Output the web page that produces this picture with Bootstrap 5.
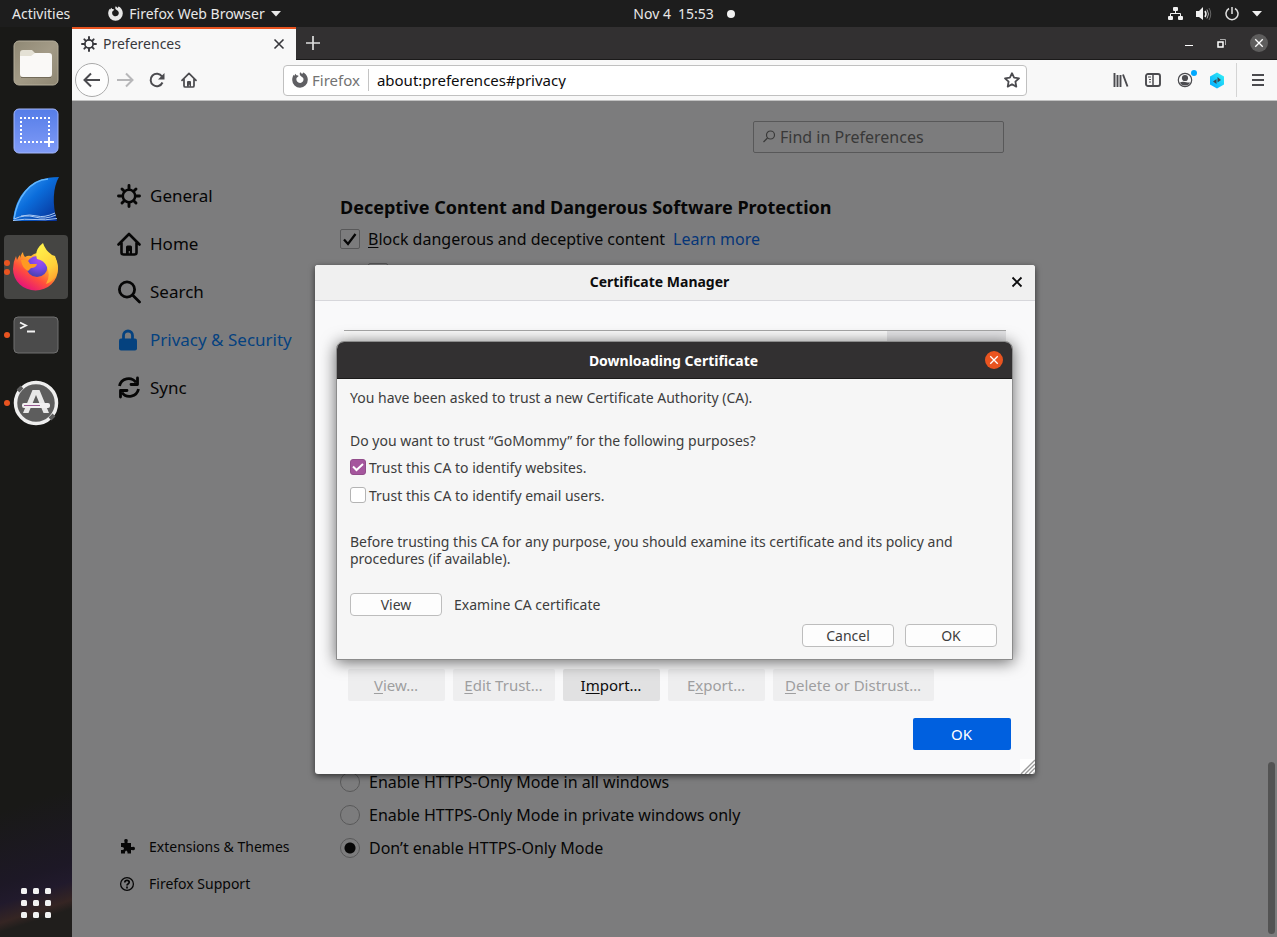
<!DOCTYPE html>
<html lang="en">
<head>
<meta charset="utf-8">
<meta name="viewport" content="width=device-width, initial-scale=1">
<title>Preferences</title>
<link href="https://cdn.jsdelivr.net/npm/bootstrap@5.3.0/dist/css/bootstrap.min.css" rel="stylesheet">
<style>
  body { font-family: "Noto Sans", "Open Sans", sans-serif; font-size: 14px; line-height: 18px; background: #1d1d1d; color: #0c0c0d; }
  a { text-decoration: none; }
  button { border: 0; background: none; padding: 0; color: inherit; }
  svg { display: block; flex: none; }
  u { text-underline-offset: 2px; }

  /* Desktop top bar */
  .topbar { height: 27px; background: #1d1d1d; color: #e8e8e8; font-size: 14px; line-height: 26px; padding: 0 15px 0 12px; }
  .topbar .half { flex: 1 1 0; }
  .topbar .app-menu { gap: 6px; margin-left: 38px; }
  .topbar .clock { gap: 13px; margin-left: 94px; }
  .topbar .status { gap: 13px; }
  .rec-dot { width: 8px; height: 8px; border-radius: 50%; background: #f2f2f2; }

  /* Dock */
  .dock { width: 72px; padding: 4px 4px 19px; background: linear-gradient(162deg, #191917 0 84%, #1d1826 92%, #211a2c 94%, #352523 96%, #201e1c 97%); }
  .dock-item { height: 64px; border-radius: 4px; margin-bottom: 4px; }
  .dock-item.current { background: #454543; }
  .run-dots { left: 0; top: 0; bottom: 0; gap: 3px; }
  .run-dots i { width: 6px; height: 6px; border-radius: 50%; background: #e95420; }

  /* Browser chrome */
  .tabstrip { height: 33px; background: #323031; border-bottom: 1px solid #1b1a1a; }
  .tab-active { width: 224px; height: 33px; background: #f8f8f8; border-top: 2px solid #e95420; color: #38383d; padding: 0 10px 0 9px; gap: 6px; }
  .new-tab { margin-left: 10px; }
  .win-btns { gap: 24px; margin-right: 9px; }
  .win-close { width: 18px; height: 18px; border-radius: 50%; background: #5e5d5d; }
  .toolbar { height: 41px; background: #f8f8f8; border-bottom: 1px solid #c2c2c2; padding: 0 0 0 3px; color: #4b4b4f; }
  .tool { width: 32px; height: 32px; }
  .tool-back { width: 34px; height: 34px; border: 1px solid #aaa; border-radius: 50%; background: #fdfdfd; }
  .urlbar { height: 31px; margin: 0 78px; background: #fff; border: 1px solid #c0c0c0; border-radius: 4px; padding: 0 6px 0 8px; font-size: 15px; }
  .urlbar span { color: #737373; margin-left: 4px; padding-right: 8px; border-right: 1px solid #c4c4c4; line-height: 22px; }
  .urlbar input { border: 0; outline: 0; background: none; color: #0c0c0d; padding: 0 8px; min-width: 0; }
  .menu-cell { border-left: 1px solid #d4d4d4; height: 34px; width: 41px; margin-left: 3px; padding-left: 2px; }

  /* Preferences page */
  .prefs { background: #f9f9fa; font-size: 16px; line-height: 24px; }
  .side { width: 268px; padding: 71px 0 35px 45px; font-size: 17px; }
  .side a { color: #0c0c0d; height: 48px; gap: 9px; }
  .side a.chosen { color: #0a84ff; }
  .side-foot { font-size: 14px; }
  .side-foot a { height: 37px; gap: 12px; padding-left: 2px; }
  .pane { width: 664px; padding: 20px 0 73px; }
  .find { width: 251px; height: 32px; border: 1px solid #b1b1b3; border-radius: 2px; padding: 0 8px; gap: 4px; }
  .find input { border: 0; outline: 0; background: none; min-width: 0; padding: 0; }
  .find input::placeholder { color: #737373; opacity: 1; }
  .pane h2 { font-size: 18px; line-height: 24px; font-weight: 700; margin: 42px 0 8px; }
  .more { color: #0a6cf0; }
  .box, .dot { appearance: none; width: 20px; height: 20px; margin: 0; border: 1px solid #b1b1b3; border-radius: 2px; flex: none; }
  .box:checked { background: url("data:image/svg+xml,%3Csvg xmlns='http://www.w3.org/2000/svg' viewBox='0 0 18 18'%3E%3Cpath d='M3 9.5 7 14 14.500 4' fill='none' stroke='%230c0c0d' stroke-width='2.300'/%3E%3C/svg%3E"); }
  .dot { border-radius: 50%; }
  .dot:checked { background: radial-gradient(circle, #0c0c0d 5px, transparent 6px); }
  .opt { gap: 9px; height: 33px; }
  .scroll-thumb { right: 2px; bottom: 3px; width: 7px; height: 172px; border-radius: 4px; background: #a6a6a6; }

  /* Certificate Manager */
  .veil { background: rgba(0, 0, 0, .5); }
  .certs { width: 720px; background: #f9f9fa; border-radius: 3px; box-shadow: 0 2px 6px rgba(0, 0, 0, .6); overflow: hidden; font-size: 15px; }
  .certs header { height: 36px; background: #f0f0f0; border-bottom: 1px solid #d7d7db; padding: 0 12px; font-weight: 700; font-size: 14px; }
  .certs header span { padding-right: 18px; }
  .certs-body { padding: 29px 24px 24px; }
  .tree { height: 331px; margin: 0 5px; border-top: 1px solid #a6a6a6; background: #fbfbfb; }
  .tree div { width: 119px; height: 26px; background: #e4e4e6; }
  .tree-btns { gap: 8px; margin: 8px 9px 17px; }
  .flat { height: 32px; width: 97px; background: #e1e1e2; border-radius: 2px; }
  .flat:disabled { background: #eeeeef; color: #9e9e9f; }
  .flat.w-edit { width: 102px; }
  .flat.w-delete { width: 161px; }
  .flat.accept { width: 98px; background: #0060df; color: #fff; }
  .grip { right: 0; bottom: 0; }

  /* Downloading Certificate */
  .ask-layer { padding-bottom: 37px; }
  .ask { width: 677px; background: #f6f6f6; color: #3d3d3d; border: 1px solid #8c8c8c; border-radius: 8px 8px 0 0; box-shadow: 0 2px 16px rgba(0, 0, 0, .6); font-size: 14px; line-height: 17px; overflow: hidden; }
  .ask header { height: 37px; background: #323031; border-bottom: 1px solid #1b1a1a; color: #fff; font-weight: 700; padding: 0 9px; }
  .ask-body { padding: 10px 15px 12px 13px; }
  .ask-body p { margin: 0 0 26px; }
  .tick { appearance: none; width: 16px; height: 16px; margin: 0; border: 1px solid #b4b4b4; border-radius: 3px; background: #fff; }
  .tick:checked { border-color: #924d8b; background: #a5569d url("data:image/svg+xml,%3Csvg xmlns='http://www.w3.org/2000/svg' viewBox='0 0 14 14'%3E%3Cpath d='M2 6.500 5.500 10 12 4' fill='none' stroke='white' stroke-width='2'/%3E%3C/svg%3E"); }
  .tick-row { gap: 3px; height: 28px; }
  .gtk { width: 92px; height: 23px; background: #fdfdfd; border: 1px solid #bdbdbd; border-radius: 4px; }
  .close-orange { width: 18px; height: 18px; border-radius: 50%; background: #e95420; }
</style>
</head>
<body class="vh-100 overflow-hidden d-flex flex-column">
<svg class="d-none">
  <symbol id="gear" viewBox="0 0 24 24"><g fill="none" stroke="currentColor"><circle cx="12" cy="12" r="6.200" stroke-width="2.500"/><path d="M12 1.500v4M12 18.500v4M1.500 12h4M18.500 12h4M5 5l2.300 2.300M16.700 16.700 19 19M5 19l2.300-2.300M16.700 7.300 19 5" stroke-width="2.900" stroke-linecap="round"/></g></symbol>
  <symbol id="house" viewBox="0 0 24 24"><path d="M1.500 12.500 12 2l10.500 10.500M4.500 11v9.500q0 2 2 2h11q2 0 2-2V11" fill="none" stroke="currentColor" stroke-width="2.600" stroke-linecap="round" stroke-linejoin="round"/><path d="M9 22v-7q0-1.500 1.500-1.500h3q1.500 0 1.500 1.500v7h-2.200v-3h-1v3z" fill="currentColor"/></symbol>
  <symbol id="swirl" viewBox="0 0 16 16"><path d="M8.300.300C9 .800 9.600 1.300 9.900 2 12 .800 10.800.300 10.800.300c3 1 5 4.200 5 7.500A7.800 7.800 0 0 1 .200 8c0-2 .600-3.800 1.500-5.200l.400 1.200L3.500 1.800l.900 1.500c.9-.2 1.800.200 2.300.800L5.300 5.200 4.500 6c-.6 3 1.300 5 3.700 4.900C11 10.700 12.300 8 11 5.800 10.300 4.800 9 4.300 8.200 3.400 7.500 2.500 7.600 1.200 8.300.300z" fill="currentColor"/></symbol>
  <symbol id="cross" viewBox="0 0 12 12"><path d="M1.500 1.500l9 9M10.500 1.500l-9 9" stroke="currentColor" stroke-width="1.600" fill="none"/></symbol>
  <symbol id="caret" viewBox="0 0 10 6"><path d="M0 0h10L5 5.500z" fill="currentColor"/></symbol>
</svg>

<nav class="topbar d-flex align-items-center flex-shrink-0">
  <div class="half d-flex align-items-center">
    <button type="button">Activities</button>
    <button type="button" class="app-menu d-flex align-items-center"><svg width="15" height="15"><use href="#swirl"/></svg>Firefox Web Browser<svg width="10" height="6"><use href="#caret"/></svg></button>
  </div>
  <div class="clock d-flex align-items-center"><span>Nov 4&ensp;15:53</span><span class="rec-dot"></span></div>
  <div class="half status d-flex align-items-center justify-content-end">
    <svg width="15" height="14" viewBox="0 0 15 14" fill="#f0f0f0"><rect x="5" width="5" height="4" rx="1"/><rect y="9" width="5" height="4" rx="1"/><rect x="10" y="9" width="5" height="4" rx="1"/><path d="M7.500 4v3M2.500 9V6.500h10V9" fill="none" stroke="#f0f0f0"/></svg>
    <svg width="16" height="14" viewBox="0 0 16 14" fill="none" stroke="#f0f0f0"><path d="M0 4h3l4-4v13L3 10H0z" fill="#f0f0f0" stroke="none"/><path d="M9 4q2 3 0 6" stroke-width="1.500"/><path d="M11 2.500q3 4.500 0 9" stroke="#aaa"/><path d="M13 1q3.500 6 0 12" stroke="#666"/></svg>
    <svg width="14" height="14" viewBox="0 0 14 14" fill="none" stroke="#e0e0e0" stroke-width="1.500"><path d="M4 1.500a6 6 0 1 0 6 0M7 0v7"/></svg>
    <svg width="10" height="6" color="#f0f0f0"><use href="#caret"/></svg>
  </div>
</nav>

<div class="d-flex flex-grow-1" style="min-height:0">
  <aside class="dock d-flex flex-column flex-shrink-0">
    <div class="dock-item d-flex align-items-center justify-content-center">
      <svg width="46" height="46" viewBox="0 0 46 46"><defs><linearGradient id="fileBg" x1="0" y1="0" x2="1" y2="1"><stop stop-color="#8f8874"/><stop offset=".5" stop-color="#a39b87"/><stop offset="1" stop-color="#8f8773"/></linearGradient></defs><rect x="1" y="1" width="44" height="44" rx="5" fill="url(#fileBg)" stroke="#b5ae9b"/><path d="M7 13q0-3 3-3h9l3 3h13v6H7z" fill="#e4e1d5"/><path d="M7 16h11l4-3h14q3 0 3 3v18q0 3-3 3H10q-3 0-3-3z" fill="#faf9f7"/><path d="M8 37.500h30" stroke="#726b59"/></svg>
    </div>
    <div class="dock-item d-flex align-items-center justify-content-center">
      <svg width="46" height="46" viewBox="0 0 46 46"><defs><linearGradient id="shotBg" x1="0" y1="0" x2="0" y2="1"><stop stop-color="#557de8"/><stop offset="1" stop-color="#809bf7"/></linearGradient></defs><rect x="1" y="1" width="44" height="44" rx="5" fill="url(#shotBg)" stroke="#a5b8fb"/><path d="M7 10h30M7 34h24M8 13v20M36 13v16" stroke="#fff" stroke-width="2" stroke-dasharray="2 2"/><path d="M36 29v10M31 34h10" stroke="#fff" stroke-width="2"/></svg>
    </div>
    <div class="dock-item d-flex align-items-center justify-content-center">
      <svg width="48" height="46" viewBox="0 0 48 46"><defs><linearGradient id="fin" x1="0" y1="0" x2="1" y2="1"><stop stop-color="#47a8ff"/><stop offset=".45" stop-color="#0b6ddb"/><stop offset="1" stop-color="#072c91"/></linearGradient></defs><path d="M1 45C3 20 18 1 47 1 41 11 40 28 45 45z" fill="url(#fin)"/><path d="M2 43C5 22 18 4 36 3" fill="none" stroke="#62b6ff" stroke-width="1.500"/><path d="M2 43q11-5 21-2t21-2M1 44.500q12-2 22-1t22-1M9 40q9-2 16 0t18-3" fill="none" stroke="#a9c8f2"/></svg>
    </div>
    <div class="dock-item current position-relative d-flex align-items-center justify-content-center">
      <span class="run-dots position-absolute d-flex flex-column justify-content-center"><i></i><i></i></span>
      <svg width="48" height="48" viewBox="0 0 48 48"><defs><linearGradient id="fxBody" x1=".9" y1=".1" x2=".25" y2=".95"><stop stop-color="#fff44f"/><stop offset=".35" stop-color="#ffa42a"/><stop offset=".65" stop-color="#ff4f3c"/><stop offset="1" stop-color="#e5127b"/></linearGradient><linearGradient id="fxFlame" x1=".4" y1="0" x2=".8" y2="1"><stop stop-color="#fff04a"/><stop offset=".6" stop-color="#ffd03a"/><stop offset="1" stop-color="#ff9a2c"/></linearGradient><radialGradient id="fxGlobe" cx=".6" cy=".2" r=".8"><stop stop-color="#a84bf0"/><stop offset=".5" stop-color="#7b48e8"/><stop offset="1" stop-color="#4a42ae"/></radialGradient></defs>
      <path d="M8 15q1-4 3-6 0 3 2 5 3-2 6-1 5-4 12-3l10 5 1-2q4 6 4 13a22.500 21.500 0 0 1-45 0q0-7 3-13l1 4q1-3 3-5z" fill="url(#fxBody)"/><circle cx="25" cy="23.500" r="10.500" fill="url(#fxGlobe)"/><path d="M9 17q7-1 9 4l7 0q-1 4-6 4l-3 3q-6-3-7-11z" fill="#ff9a22"/><path d="M31 0q2 7 9 12l3 1q5 11 1 20-4 6-10 8 5-8 1-17-3-7-10-8-3-9 6-16z" fill="url(#fxFlame)"/></svg>
    </div>
    <div class="dock-item position-relative d-flex align-items-center justify-content-center">
      <span class="run-dots position-absolute d-flex flex-column justify-content-center"><i></i></span>
      <svg width="46" height="38" viewBox="0 0 46 38"><rect x="1" y="1" width="44" height="36" rx="4" fill="#4b4b4b" stroke="#707070"/><path d="M7 6.500l6 3-6 3M14 15.500h8" fill="none" stroke="#f4f4f4" stroke-width="1.800"/></svg>
    </div>
    <div class="dock-item position-relative d-flex align-items-center justify-content-center">
      <span class="run-dots position-absolute d-flex flex-column justify-content-center"><i></i></span>
      <svg width="46" height="46" viewBox="0 0 46 46"><circle cx="23" cy="23" r="20.500" fill="#5d5d5d" stroke="#eee" stroke-width="3.500"/><path d="M5 11l4-4M37 39l4-4" stroke="#5d5d5d" stroke-width="4"/><path d="M19.500 10h7L36 33h-5.500L23 15l-7.500 18H10z" fill="#e8e8e8"/><rect x="9" y="23" width="28" height="5" rx="2" fill="#f0eff0"/><path d="M11 25.500h16" stroke="#985b92"/></svg>
    </div>
    <button type="button" class="mt-auto mx-auto" aria-label="Show applications"><svg width="30" height="30" viewBox="0 0 30 30" fill="#f2f2f2"><g id="dots"><rect width="6" height="6" rx="1.500"/><rect x="12" width="6" height="6" rx="1.500"/><rect x="24" width="6" height="6" rx="1.500"/></g><use href="#dots" y="12"/><use href="#dots" y="24"/></svg></button>
  </aside>

  <div class="d-flex flex-column flex-grow-1" style="min-width:0">
    <div class="tabstrip d-flex align-items-center flex-shrink-0">
      <div class="tab-active d-flex align-items-center">
        <svg width="16" height="16"><use href="#gear"/></svg><span class="flex-grow-1">Preferences</span>
        <button type="button" aria-label="Close tab"><svg width="14" height="12"><use href="#cross"/></svg></button>
      </div>
      <button type="button" class="new-tab" aria-label="New tab"><svg width="14" height="14" viewBox="0 0 14 14"><path d="M7 0v14M0 7h14" stroke="#ddd" stroke-width="1.700"/></svg></button>
      <div class="win-btns ms-auto d-flex align-items-center">
        <button type="button" aria-label="Minimize"><svg width="8" height="8" viewBox="0 0 8 8"><path d="M0 6.500h8" stroke="#fff"/></svg></button>
        <button type="button" aria-label="Restore"><svg width="9" height="9" viewBox="0 0 9 9" fill="none"><path d="M3 .500h5.500V6" stroke="#aaa"/><rect x="1" y="3" width="5" height="5" stroke="#fff" stroke-width="1.500"/></svg></button>
        <button type="button" class="win-close d-flex align-items-center justify-content-center text-white" aria-label="Close window"><svg width="10" height="10"><use href="#cross"/></svg></button>
      </div>
    </div>

    <div class="toolbar d-flex align-items-center flex-shrink-0">
      <button type="button" class="tool-back d-flex align-items-center justify-content-center" aria-label="Back"><svg width="18" height="16" viewBox="0 0 18 16"><path d="M17 8H2M8 1.500 1.500 8 8 14.500" fill="none" stroke="#4b4b4f" stroke-width="2"/></svg></button>
      <button type="button" class="tool d-flex align-items-center justify-content-center" aria-label="Forward"><svg width="18" height="16" viewBox="0 0 18 16"><path d="M1 8h15M10 1.500 16.500 8 10 14.500" fill="none" stroke="#b7b7b9" stroke-width="2"/></svg></button>
      <button type="button" class="tool d-flex align-items-center justify-content-center" aria-label="Reload"><svg width="16" height="16" viewBox="0 0 16 16"><path d="M13.500 10.500A6.200 6.200 0 1 1 13 4.500" fill="none" stroke="#4b4b4f" stroke-width="2"/><path d="M15.500 1v6.500H9z" fill="#4b4b4f"/></svg></button>
      <button type="button" class="tool d-flex align-items-center justify-content-center" aria-label="Home"><svg width="16" height="16"><use href="#house"/></svg></button>
      <div class="urlbar d-flex align-items-center flex-grow-1">
        <svg width="16" height="16" color="#5f5f63"><use href="#swirl"/></svg><span>Firefox</span>
        <input class="flex-grow-1" type="text" value="about:preferences#privacy" aria-label="Address">
        <svg width="16" height="16" viewBox="0 0 16 16"><path d="M8 1.200l2.100 4.500 4.900.600-3.600 3.400.9 4.900L8 12.200l-4.300 2.400.9-4.900L1 6.300l4.900-.6z" fill="none" stroke="#4b4b4f" stroke-width="1.800" stroke-linejoin="round"/></svg>
      </div>
      <button type="button" class="tool d-flex align-items-center justify-content-center" aria-label="Library"><svg width="16" height="14" viewBox="0 0 16 14"><path d="M1.500 0v14M4.500 2v12M7.500 2v12M10 1.500l4.500 12" stroke="#4b4b4f" stroke-width="1.900"/></svg></button>
      <button type="button" class="tool d-flex align-items-center justify-content-center" aria-label="Sidebars"><svg width="16" height="14" viewBox="0 0 16 14" fill="none" stroke="#4b4b4f"><rect x="1" y="1" width="14" height="12" rx="2" stroke-width="1.900"/><path d="M8 1v12" stroke-width="1.500"/><path d="M3 4h3M4 6.500h2M4 9h2"/></svg></button>
      <button type="button" class="tool position-relative d-flex align-items-center justify-content-center" aria-label="Account"><svg width="16" height="16" viewBox="0 0 16 16"><circle cx="8" cy="8" r="6.700" fill="none" stroke="#4b4b4f" stroke-width="1.200"/><circle cx="8" cy="6" r="3.100" fill="#4b4b4f"/><path d="M3 10.500q2-1 5-.5t5 .5q-1 3-5 3t-5-3z" fill="#4b4b4f"/></svg><svg class="position-absolute top-0 end-0 mt-1 me-1" width="7" height="10" viewBox="0 0 7 10"><circle cx="4" cy="5" r="3" fill="#00a9ff"/></svg></button>
      <button type="button" class="tool d-flex align-items-center justify-content-center" aria-label="Extension"><svg width="16" height="17" viewBox="0 0 16 17"><defs><linearGradient id="hex" x1="0" y1="1" x2="1" y2="0"><stop stop-color="#00a6ff"/><stop offset="1" stop-color="#36f3f5"/></linearGradient></defs><path d="M8 .500l7 4v8l-7 4-7-4v-8z" fill="url(#hex)"/><path d="M8.500 5 12 8l-3.500 2.500zM7.500 7v5L4 9.500z" fill="#3b4650"/></svg></button>
      <div class="menu-cell d-flex align-items-center justify-content-center"><button type="button" aria-label="Menu"><svg width="12" height="12" viewBox="0 0 12 12"><path d="M0 1h12M0 6h12M0 11h12" stroke="#4b4b4f" stroke-width="2"/></svg></button></div>
    </div>

    <main class="prefs position-relative d-flex flex-grow-1 overflow-hidden">
      <nav class="side d-flex flex-column flex-shrink-0">
        <a href="#general" class="d-flex align-items-center"><svg width="24" height="24"><use href="#gear"/></svg>General</a>
        <a href="#home" class="d-flex align-items-center"><svg width="24" height="24"><use href="#house"/></svg>Home</a>
        <a href="#search" class="d-flex align-items-center"><svg width="24" height="24" viewBox="0 0 24 24" fill="none" stroke="currentColor" stroke-width="2.800"><circle cx="10" cy="9.500" r="7.600"/><path d="M15.500 15l7 7" stroke-linecap="round"/></svg>Search</a>
        <a href="#privacy" class="chosen d-flex align-items-center"><svg width="24" height="24" viewBox="0 0 24 24"><path d="M6.500 11V7.500a4.500 4.500 0 0 1 9 0V11" fill="none" stroke="currentColor" stroke-width="2.800"/><rect x="2" y="10.500" width="18" height="12" rx="2" fill="currentColor"/></svg>Privacy &amp; Security</a>
        <a href="#sync" class="d-flex align-items-center"><svg width="24" height="24" viewBox="0 0 24 24" fill="none" stroke="currentColor" stroke-width="2.800"><path d="M2.500 10A9.200 9.200 0 0 1 19 6.500M21.500 13A9.200 9.200 0 0 1 5 16.500"/><path d="M20.500 2v6.500H14M3.500 21v-6.500H10" stroke-linecap="round" stroke-linejoin="round"/></svg>Sync</a>
        <div class="side-foot mt-auto">
          <a href="#extensions" class="d-flex align-items-center"><svg width="18" height="16" viewBox="0 0 18 16"><path d="M2 4h3.500V3q-1-3 1.500-3t1.500 3v1H12v4h1q3-1 3 1.500T13 11h-1v3.500H8.500V13Q7 10 6 13v1.500H2V11q3 .5 3-1.500T2 8z" fill="currentColor"/></svg>Extensions &amp; Themes</a>
          <a href="#support" class="d-flex align-items-center"><svg width="18" height="16" viewBox="0 0 18 16" fill="none" stroke="currentColor"><circle cx="8" cy="8" r="6.400" stroke-width="1.300"/><path d="M5.800 6.500q0-2.200 2.200-2.200t2.200 2q0 1-1.200 1.600-1 .6-1 1.600M8 10.600v1.800" stroke-width="1.700"/></svg>Firefox Support</a>
        </div>
      </nav>
      <section class="pane d-flex flex-column">
        <label class="find d-flex align-items-center align-self-end flex-shrink-0"><svg width="14" height="14" viewBox="0 0 14 14" fill="none" stroke="#737373" stroke-width="1.200"><circle cx="8.500" cy="5" r="4"/><path d="M5.500 8 1.500 12"/></svg><input type="text" class="flex-grow-1" placeholder="Find in Preferences" aria-label="Find in Preferences"></label>
        <h2>Deceptive Content and Dangerous Software Protection</h2>
        <div class="d-flex align-items-center"><input class="box" type="checkbox" id="block" checked><label class="ms-2" for="block"><u>B</u>lock dangerous and deceptive content</label><a class="more ms-2" href="#learn">Learn more</a></div>
        <div class="d-flex align-items-center ms-4 ps-1 mt-2 pt-1"><input class="box" type="checkbox" aria-label="Block dangerous downloads"></div>
        <div class="mt-auto">
          <label class="opt d-flex align-items-center"><input class="dot" type="radio" name="https">Enable HTTPS-Only Mode in all windows</label>
          <label class="opt d-flex align-items-center"><input class="dot" type="radio" name="https">Enable HTTPS-Only Mode in private windows only</label>
          <label class="opt d-flex align-items-center"><input class="dot" type="radio" name="https" checked>Don’t enable HTTPS-Only Mode</label>
        </div>
      </section>
      <div class="scroll-thumb position-absolute"></div>

      <div class="veil position-absolute top-0 start-0 w-100 h-100 d-flex align-items-center justify-content-center">
        <section class="certs position-relative">
          <header class="d-flex align-items-center"><span class="flex-grow-1 text-center">Certificate Manager</span><button type="button" aria-label="Close"><svg width="12" height="12" viewBox="0 0 12 12"><path d="M1.500 1.500l9 9M10.500 1.500l-9 9" stroke="#0c0c0d" stroke-width="1.800"/></svg></button></header>
          <div class="certs-body">
            <div class="tree d-flex justify-content-end"><div></div></div>
            <div class="tree-btns d-flex">
              <button type="button" class="flat" disabled><u>V</u>iew…</button>
              <button type="button" class="flat w-edit" disabled><u>E</u>dit Trust…</button>
              <button type="button" class="flat">I<u>m</u>port…</button>
              <button type="button" class="flat" disabled>E<u>x</u>port…</button>
              <button type="button" class="flat w-delete" disabled><u>D</u>elete or Distrust…</button>
            </div>
            <div class="text-end"><button type="button" class="flat accept d-inline-block align-top">OK</button></div>
          </div>
          <svg class="grip position-absolute" width="15" height="15" viewBox="0 0 15 15"><path d="M0 0h15v15H0z" fill="#fff"/><path d="M1 15 15 1M5 15 15 5M9 15l6-6M13 15l2-2" stroke="#999" stroke-width="1.400"/></svg>
        </section>
      </div>

      <div class="ask-layer position-absolute top-0 start-0 w-100 h-100 d-flex align-items-center justify-content-center">
        <section class="ask">
          <header class="d-flex align-items-center"><span class="flex-grow-1 text-center ps-3">Downloading Certificate</span><button type="button" class="close-orange d-flex align-items-center justify-content-center" aria-label="Close"><svg width="10" height="10"><use href="#cross"/></svg></button></header>
          <div class="ask-body">
            <p>You have been asked to trust a new Certificate Authority (CA).</p>
            <p class="mb-1">Do you want to trust “GoMommy” for the following purposes?</p>
            <label class="tick-row d-flex align-items-center"><input class="tick" type="checkbox" checked>Trust this CA to identify websites.</label>
            <label class="tick-row d-flex align-items-center mb-4"><input class="tick" type="checkbox">Trust this CA to identify email users.</label>
            <p>Before trusting this CA for any purpose, you should examine its certificate and its policy and procedures (if available).</p>
            <div class="d-flex align-items-center mb-2"><button type="button" class="gtk">View</button><span class="ms-2 ps-1">Examine CA certificate</span></div>
            <div class="d-flex justify-content-end" style="gap:11px"><button type="button" class="gtk">Cancel</button><button type="button" class="gtk">OK</button></div>
          </div>
        </section>
      </div>
    </main>
  </div>
</div>
<script src="https://cdn.jsdelivr.net/npm/bootstrap@5.3.0/dist/js/bootstrap.bundle.min.js"></script>
</body>
</html>
